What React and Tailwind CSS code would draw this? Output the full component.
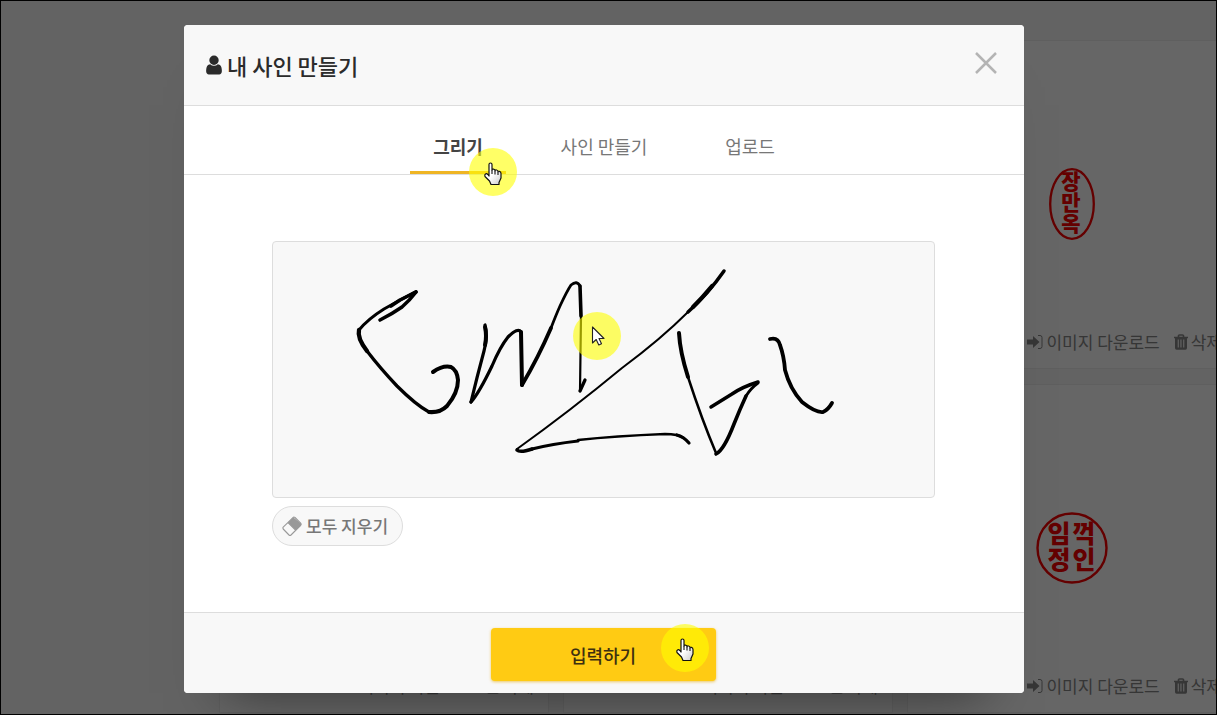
const seals = [null, null, "oval", null, null, "round"];

function OvalSeal() {
  return (
    <svg className="h-[72px] w-[46px]" viewBox="0 0 46 72" role="img" aria-label="장만옥">
      <ellipse cx="23" cy="36" rx="21.8" ry="34.8" fill="none" stroke="#fa0000" strokeWidth="2.3" />
      <g fill="#fa0000" fontFamily="'Noto Sans CJK KR', sans-serif" fontWeight="900" fontSize="21" textAnchor="middle">
        <text x="22" y="21">장</text>
        <text x="22" y="42">만</text>
        <text x="22" y="63">옥</text>
      </g>
    </svg>
  );
}

function RoundSeal() {
  return (
    <svg className="h-[72px] w-[72px]" viewBox="0 0 72 72" role="img" aria-label="임꺽정인">
      <circle cx="36" cy="36" r="34.5" fill="none" stroke="#fa0000" strokeWidth="2.4" />
      <g fill="#fa0000" fontFamily="'Noto Sans CJK KR', sans-serif" fontWeight="900" fontSize="25" textAnchor="middle">
        <text x="23" y="31">임</text>
        <text x="48" y="31">꺽</text>
        <text x="23" y="57">정</text>
        <text x="48" y="57">인</text>
      </g>
    </svg>
  );
}

function DownloadIcon() {
  return (
    <svg className="h-4 w-4" viewBox="0 0 16 16" aria-hidden="true">
      <path d="M0 5.500h6V2l6.500 6L6 14v-3.500H0z" fill="currentColor" />
      <path d="M11 1.500h2a2 2 0 0 1 2 2v9a2 2 0 0 1-2 2h-2" fill="none" stroke="currentColor" strokeWidth="1" />
    </svg>
  );
}

function TrashIcon() {
  return (
    <svg className="h-4 w-3.5" viewBox="0 0 14 16" aria-hidden="true">
      <path d="M0 3.500h14M4.500 3V1.800Q4.500 1 5.500 1h3Q9.500 1 9.500 1.800V3" fill="none" stroke="currentColor" strokeWidth="1.700" />
      <path
        fillRule="evenodd"
        d="M1 3.500h12V14q0 1.700-1.600 1.700H2.600Q1 15.700 1 14zM3.700 5.500v8h1.100v-8zM6.400 5.500v8h1.100v-8zM9.200 5.500v8h1.100v-8z"
        fill="currentColor"
      />
    </svg>
  );
}

function UserIcon() {
  return (
    <svg className="size-[22px]" viewBox="128 0 1536 1792" aria-hidden="true">
      <path
        d="M1536 1399q0 109-62.500 187t-150.500 78h-854q-88 0-150.500-78t-62.500-187q0-85 8.500-160.500t31.500-152 58.500-131 94-89 134.500-34.500q131 128 313 128t313-128q76 0 134.500 34.500t94 89 58.500 131 31.500 152 8.500 160.500zm-256-887q0 159-112.500 271.500t-271.500 112.500-271.500-112.500-112.500-271.500 112.500-271.500 271.500-112.500 271.500 112.500 112.500 271.500z"
        fill="currentColor"
      />
    </svg>
  );
}

function SignCard({ seal }) {
  return (
    <article className="flex h-[329px] flex-col border border-[#ededed] bg-white">
      <div className="flex flex-1 items-center justify-center pt-[50px]">
        {seal === "oval" && <OvalSeal />}
        {seal === "round" && <RoundSeal />}
      </div>
      <div className="flex h-[52px] shrink-0 items-center justify-end gap-[14px] pr-[14px] text-[17px] whitespace-nowrap text-[#888]">
        <button className="flex items-center gap-[3px]"><DownloadIcon />이미지 다운로드</button>
        <button className="flex items-center gap-[3px]"><TrashIcon />삭제</button>
      </div>
    </article>
  );
}

function HandPointer() {
  return (
    <svg className="mt-1 h-6 w-5" viewBox="0 0 20 24" aria-hidden="true">
      <defs>
        <linearGradient id="hand" x1="0" y1="0" x2="1" y2="1">
          <stop offset=".5" stopColor="#fff" />
          <stop offset="1" stopColor="#ccc" />
        </linearGradient>
      </defs>
      <path
        d="M6 13V2.500Q6 1 7.500 1T9 2.500V8Q9 7 10.500 7.200T12 8.800Q12 7.800 13.500 8T15 9.800Q15 9 16.500 9.400T18 11.500V16l-2 4.500v2H8L6.500 19 2 14.500Q1.300 12.800 2.500 12T4.800 12.500L6 14z"
        fill="url(#hand)"
        stroke="#111"
        strokeWidth="1.200"
        strokeLinejoin="round"
      />
      <path d="M9 8v4M12 9v3.500M15 10v3" fill="none" stroke="#111" strokeWidth="1.100" />
    </svg>
  );
}

function ArrowPointer() {
  return (
    <svg className="ml-1 h-5 w-4" viewBox="0 0 16 20" aria-hidden="true">
      <path d="M1.500 1v16l3.700-3.500 2.600 5.500 2.700-1.200-2.500-5.300h5z" fill="#fff" stroke="#222" strokeWidth="1.100" strokeLinejoin="round" />
    </svg>
  );
}

function Spotlight({ className, children }) {
  return (
    <span className={`pointer-events-none absolute flex size-12 items-center justify-center rounded-full bg-[#ffff00]/60 ${className}`}>
      {children}
    </span>
  );
}

function Signature() {
  return (
    <svg className="block h-[255px] w-full" viewBox="273 242 661 255" role="img" aria-label="서명">
      <g fill="none" stroke="#000" strokeLinecap="round" strokeLinejoin="round">
        <path d="M380 320Q392 314 402 307Q410 300 416 292" strokeWidth="3.600" />
        <path d="M415 292Q400 300 384 309Q368 319 359 330" strokeWidth="3" />
        <path d="M416 292L400 300L391 306" strokeWidth="3.600" />
        <path d="M359 330Q357 338 367 351" strokeWidth="4.300" />
        <path d="M367 351Q380 368 397 386Q416 405 429 412" strokeWidth="3.300" />
        <path d="M429 412Q440 413 447 406Q458 393 458 380Q457 370 451 367Q443 365 433 372" strokeWidth="4" />
        <path d="M485 325Q488 336 484 351Q477 377 471 402" strokeWidth="3.200" />
        <path d="M485 327Q487 336 485 345" strokeWidth="4" />
        <path d="M471 402Q479 393 492 366Q500 347 508 337Q518 327 521 332" strokeWidth="3.200" />
        <path d="M521 332L522 385" strokeWidth="4" />
        <path d="M522 385Q538 358 551 328" strokeWidth="3.800" />
        <path d="M551 328Q556 315 560 306Q567 291 571 285Q577 280 580 286" strokeWidth="2.800" />
        <path d="M580 286L581 316" strokeWidth="3.600" />
        <path d="M581 316L580 391" strokeWidth="2.200" />
        <path d="M580 391L585 380" strokeWidth="3.300" />
        <path d="M724 271Q708 294 688 312" strokeWidth="3.500" />
        <path d="M712 286Q702 298 693 307" strokeWidth="4.200" />
        <path d="M688 312Q661 339 622 368Q570 411 517 449" strokeWidth="2" />
        <path d="M517 450Q520 453 532 449" strokeWidth="3.600" />
        <path d="M532 449Q552 444 578 441" strokeWidth="3.200" />
        <path d="M578 440Q615 436 665 434Q678 434 684 438" strokeWidth="2.500" />
        <path d="M677 435Q684 437 689 443" strokeWidth="3.200" />
        <path d="M679 333Q680 352 688 377" strokeWidth="4" />
        <path d="M688 377Q702 420 716 453" strokeWidth="2.500" />
        <path d="M716 454Q724 450 734 424Q740 409 746 396" strokeWidth="3.600" />
        <path d="M746 396Q751 388 758 383" strokeWidth="2.800" />
        <path d="M758 382Q742 387 732 394L711 407" strokeWidth="3.500" />
        <path d="M770 339Q778 337 780 345Q784 356 785 370Q790 389 802 402Q816 413 823 412Q828 410 832 403" strokeWidth="3.800" />
      </g>
    </svg>
  );
}

function EraserIcon() {
  return (
    <svg className="size-5" viewBox="0 0 20 20" aria-hidden="true">
      <path d="M11.200 1.300 19 7.500Q19.700 8.500 19 9.500L13.500 14 6 6.500z" fill="#999" />
      <path d="M11.500 1.200Q12 .8 13 1.500l5.700 5.700Q19.500 8.500 18.500 9.500L9 19Q8 19.800 7 19L1.200 13Q.6 12 1.200 11.200zM6 6.500l7.500 7.500" fill="none" stroke="#999" strokeWidth="1.100" strokeLinejoin="round" />
    </svg>
  );
}

export default function App() {
  return (
    <div className="relative h-screen overflow-hidden bg-[#f8f8f8] font-['Noto_Sans_CJK_KR',sans-serif]">
      <main className="ml-[219px] grid grid-cols-[repeat(3,330px)] gap-x-[14px] gap-y-[15px] pt-10">
        {seals.map((seal, i) => <SignCard key={i} seal={seal} />)}
      </main>

      <div className="absolute inset-0 flex items-start justify-center border border-black bg-black/60 pt-6 pr-[9px]">
        <section role="dialog" aria-labelledby="dialog-title" className="w-full max-w-[840px] rounded bg-white shadow-[0_40px_50px_-40px_rgba(0,0,0,0.5)]">
          <header className="flex h-[81px] items-center justify-between rounded-t border-b border-[#ddd] bg-[#f8f8f8] pr-6 pl-[19px]">
            <h1 id="dialog-title" className="flex items-center gap-0.5 text-[22px] font-medium text-[#2b2b2b]">
              <UserIcon />내 사인 만들기
            </h1>
            <button aria-label="닫기" className="p-0.5 pb-1.5">
              <svg className="size-6" viewBox="0 0 24 24" fill="none" stroke="#b4b4b4" strokeWidth="2.500">
                <path d="M2 2 22 22M22 2 2 22" />
              </svg>
            </button>
          </header>

          <div role="tablist" className="flex h-[69px] justify-center gap-[50px] border-b border-[#ddd] pt-[14px] text-lg text-[#777]">
            <button role="tab" aria-selected="true" className="relative w-24 border-b-[3px] border-[#efb524] font-bold text-[#444]">
              그리기
              <Spotlight className="top-7 left-[59px]"><HandPointer /></Spotlight>
            </button>
            <button role="tab" aria-selected="false" className="w-24 border-b-[3px] border-transparent">사인 만들기</button>
            <button role="tab" aria-selected="false" className="w-24 border-b-[3px] border-transparent">업로드</button>
          </div>

          <div className="pt-[66px] pr-[89px] pb-[66px] pl-[88px]">
            <div className="relative rounded border border-[#ddd] bg-[#f8f8f8]">
              <Signature />
              <Spotlight className="top-[70px] left-[300px]"><ArrowPointer /></Spotlight>
            </div>
            <button className="mt-2 flex h-10 items-center gap-1 rounded-full border border-[#ddd] bg-[#f8f8f8] pr-[14px] pl-[9px] text-[17px] font-medium text-[#777]">
              <EraserIcon />모두 지우기
            </button>
          </div>

          <footer className="flex h-[81px] items-start justify-center rounded-b border-t border-[#ddd] bg-[#f8f8f8] pt-[15px] pr-0.5">
            <button className="relative h-[53px] w-[225px] rounded bg-[#ffcb13] text-lg font-medium text-[#3d3010] shadow-[0_1px_3px_rgba(230,170,0,0.6)]">
              입력하기
              <Spotlight className="-top-1 right-[7px]"><HandPointer /></Spotlight>
            </button>
          </footer>
        </section>
      </div>
    </div>
  );
}
